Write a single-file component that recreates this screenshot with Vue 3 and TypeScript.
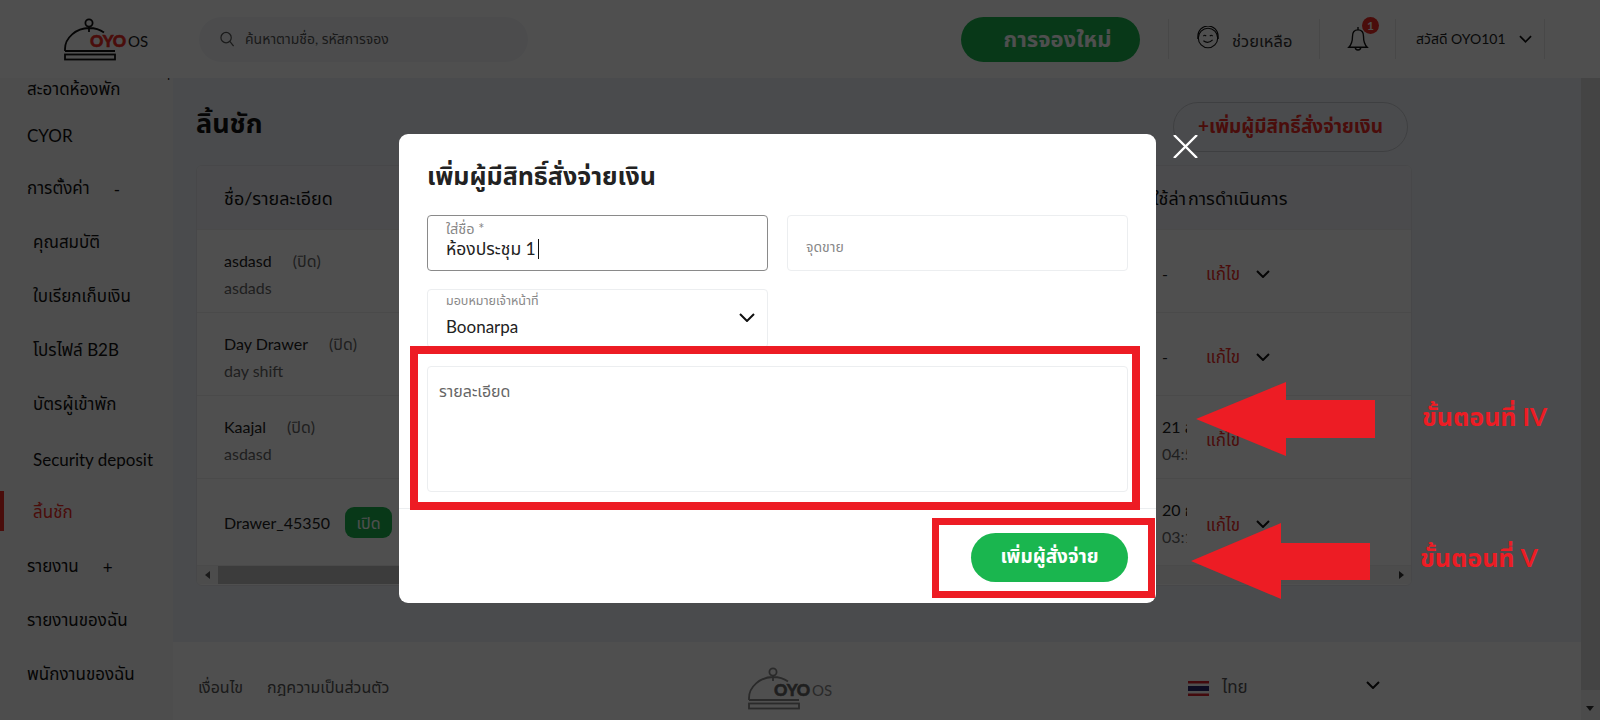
<script setup lang="ts">
interface NavItem { label: string; sub?: boolean; active?: boolean; sign?: string }
interface Row { name: string; status: string; open?: boolean; detail?: string; date: string; time?: string }

const nav: NavItem[] = [
  { label: 'สะอาดห้องพัก' },
  { label: 'CYOR' },
  { label: 'การตั้งค่า', sign: '-' },
  { label: 'คุณสมบัติ', sub: true },
  { label: 'ใบเรียกเก็บเงิน', sub: true },
  { label: 'โปรไฟล์ B2B', sub: true },
  { label: 'บัตรผู้เข้าพัก', sub: true },
  { label: 'Security deposit', sub: true },
  { label: 'ลิ้นชัก', sub: true, active: true },
  { label: 'รายงาน', sign: '+' },
  { label: 'รายงานของฉัน' },
  { label: 'พนักงานของฉัน' }
]

const rows: Row[] = [
  { name: 'asdasd', status: '(ปิด)', detail: 'asdads', date: '-' },
  { name: 'Day Drawer', status: '(ปิด)', detail: 'day shift', date: '-' },
  { name: 'Kaajal', status: '(ปิด)', detail: 'asdasd', date: '21 ส.ค.', time: '04:50' },
  { name: 'Drawer_45350', status: 'เปิด', open: true, date: '20 ก.ค.', time: '03:10' }
]
</script>

<template>
  <div class="page">
    <header class="topbar">
      <div class="brand">
        <svg class="logo" viewBox="0 0 90 50" width="90" height="50">
          <circle cx="29" cy="9" r="3.6" />
          <path d="M29 13v5M5 37v-2C5 24 16 14 29 14c6 0 11 1.500 15 4.500" />
          <path d="M5 37h50" />
          <rect x="5" y="40.500" width="50" height="5" />
          <text class="oyo" x="30" y="33">OYO</text>
          <text class="os" x="68" y="33">OS</text>
        </svg>
      </div>
      <div class="search">
        <svg viewBox="0 0 16 18" width="15" height="17"><circle cx="6.500" cy="7" r="5.500" /><path d="M10.500 11l4 5" /></svg>
        <span>ค้นหาตามชื่อ, รหัสการจอง</span>
      </div>
      <button class="new-booking">การจองใหม่</button>
      <div class="tool help">
        <svg viewBox="0 0 26 26" width="24" height="24">
          <circle cx="13" cy="13" r="10.500" />
          <path d="M2 14v-3a11 11 0 0 1 22 0v3M8 11q1.500-2 3 0M15 11q1.500-2 3 0M8 16q5 4 10-1" />
        </svg>
        <span>ช่วยเหลือ</span>
      </div>
      <div class="tool bell">
        <svg viewBox="0 0 24 28" width="22" height="26">
          <path d="M12 4c-4 0-6 3-6 7 0 6-1 9-4 12h20c-3-3-4-6-4-12 0-4-2-7-6-7zM12 1v3M9 23a3 3 0 0 0 6 0" />
        </svg>
        <b>1</b>
      </div>
      <div class="tool user">
        <span>สวัสดี OYO101</span>
        <svg class="chev" viewBox="0 0 14 8" width="13" height="8"><path d="M1 1l6 6 6-6" /></svg>
      </div>
    </header>

    <div class="body">
      <aside class="sidebar">
        <i class="clipped-plus">+</i>
        <a v-for="item in nav" :key="item.label" class="nav-item" :class="{ sub: item.sub, active: item.active }">
          {{ item.label }}<em v-if="item.sign">{{ item.sign }}</em>
        </a>
      </aside>

      <div class="column">
        <main class="content">
          <div class="title-row">
            <h1>ลิ้นชัก</h1>
            <button class="add">+เพิ่มผู้มีสิทธิ์สั่งจ่ายเงิน</button>
          </div>
          <section class="table">
            <div class="thead">
              <span>ชื่อ/รายละเอียด</span>
              <div class="thead-right"><span class="last-used">ใช้ล่า</span><span>การดำเนินการ</span></div>
            </div>
            <div v-for="row in rows" :key="row.name" class="row" :class="{ tall: row.open }">
              <div class="who">
                <div class="name">
                  {{ row.name }}
                  <span v-if="!row.open" class="closed">{{ row.status }}</span>
                  <span v-else class="badge">{{ row.status }}</span>
                </div>
                <div v-if="row.detail" class="detail">{{ row.detail }}</div>
              </div>
              <div class="row-right">
                <div class="when">
                  <div>{{ row.date }}</div>
                  <div v-if="row.time" class="detail">{{ row.time }}</div>
                </div>
                <a class="edit">แก้ไข</a>
                <svg class="chev big" viewBox="0 0 14 8" width="14" height="8"><path d="M1 1l6 6 6-6" /></svg>
              </div>
            </div>
            <div class="hscroll">
              <i class="arrow-l"></i>
              <div class="hthumb"></div>
              <i class="arrow-r"></i>
            </div>
          </section>
        </main>

        <footer class="footer">
          <nav class="links"><a>เงื่อนไข</a><a>กฎความเป็นส่วนตัว</a></nav>
          <svg class="logo muted" viewBox="0 0 90 50" width="90" height="50">
            <circle cx="29" cy="9" r="3.600" />
            <path d="M29 13v5M5 37v-2C5 24 16 14 29 14c6 0 11 1.500 15 4.500" />
            <path d="M5 37h50" />
            <rect x="5" y="40.500" width="50" height="5" />
            <text class="oyo" x="30" y="33">OYO</text>
            <text class="os" x="68" y="33">OS</text>
          </svg>
          <div class="lang">
            <svg viewBox="0 0 21 15" width="21" height="15">
              <rect width="21" height="15" fill="#fff" />
              <rect width="21" height="2.500" fill="#d8232a" />
              <rect y="12.500" width="21" height="2.500" fill="#d8232a" />
              <rect y="5" width="21" height="5" fill="#2d2a6e" />
            </svg>
            <span>ไทย</span>
            <svg class="chev big" viewBox="0 0 14 8" width="14" height="8"><path d="M1 1l6 6 6-6" /></svg>
          </div>
        </footer>
      </div>

      <div class="vscroll"><div class="vthumb"></div><i class="arrow-d"></i></div>
    </div>

    <div class="overlay"></div>

    <div class="modal" role="dialog">
      <h2>เพิ่มผู้มีสิทธิ์สั่งจ่ายเงิน</h2>
      <div class="form">
        <div class="field focused">
          <label>ใส่ชื่อ *</label>
          <div class="value">ห้องประชุม 1<i class="caret"></i></div>
        </div>
        <div class="field plain"><label>จุดขาย</label></div>
        <div class="field select">
          <label>มอบหมายเจ้าหน้าที่</label>
          <div class="value">Boonarpa</div>
          <svg class="chev big" viewBox="0 0 16 9" width="16" height="9"><path d="M1 1l7 7 7-7" /></svg>
        </div>
        <div class="field area"><label>รายละเอียด</label></div>
      </div>
      <div class="modal-foot"><button class="submit">เพิ่มผู้สั่งจ่าย</button></div>
    </div>

    <svg class="close" viewBox="0 0 25 23" width="25" height="23"><path d="M1 0l23 23M24 0L1 23" /></svg>

    <div class="frame frame-a"></div>
    <div class="frame frame-b"></div>
    <svg class="arrows" viewBox="0 0 1600 720" width="1600" height="720">
      <polygon points="1196,419 1286,382 1286,400 1375,400 1375,438 1286,438 1286,456" />
      <polygon points="1191,561 1281,523 1281,543 1370,543 1370,580 1281,580 1281,599" />
    </svg>
    <div class="step step-a">ขั้นตอนที่ IV</div>
    <div class="step step-b">ขั้นตอนที่ V</div>
  </div>
</template>

<style>
html, body { margin: 0; padding: 0; }
</style>

<style scoped>
.page {
  position: relative;
  width: 1600px;
  height: 720px;
  overflow: hidden;
  display: flex;
  flex-direction: column;
  background: #fff;
  color: #1d1d1d;
  font-family: Lato, "Noto Sans", "Noto Sans Thai", sans-serif;
  font-size: 16px;
}
button { font-family: inherit; border: 0; cursor: pointer; }
svg { display: block; flex: none; }
.chev path { fill: none; stroke: #111; stroke-width: 1.800; }
.chev.big path { stroke-width: 2; }

/* top bar */
.topbar { height: 78px; flex: none; display: flex; align-items: center; background: #fff; box-sizing: border-box; padding-right: 55px; }
.brand { width: 199px; flex: none; padding-left: 60px; box-sizing: border-box; }
.logo { fill: none; stroke: #111; stroke-width: 1.800; }
.logo text { stroke: none; }
.logo .oyo { font: 900 16.500px Lato, sans-serif; fill: #ee2a24; stroke: #ee2a24; stroke-width: 0.500; }
.logo .os { font: 400 15px Lato, sans-serif; fill: #222; }
.logo.muted { stroke: #888; }
.logo.muted .oyo { fill: #666; stroke: #666; }
.logo.muted .os { fill: #888; }
.search {
  width: 329px; height: 45px; flex: none; box-sizing: border-box; padding-left: 21px;
  display: flex; align-items: center; gap: 10px;
  background: #f4f6f9; border-radius: 23px; color: #555; font-size: 14px;
}
.search span { padding-top: 1px; }
.search svg { fill: none; stroke: #555; stroke-width: 1.300; }
.new-booking {
  margin-left: auto; width: 179px; height: 45px; flex: none; border-radius: 23px; padding: 2px 0 0 14px;
  background: #1ab64f; color: #fff; font-size: 22px; font-weight: 700;
}
.tool {
  height: 40px; flex: none; display: flex; align-items: center; position: relative;
  box-sizing: border-box; border-left: 1px solid #e8e8e8;
}
.help { margin-left: 28px; width: 151px; padding-left: 27px; gap: 12px; color: #333; font-size: 16.500px; }
.help svg { fill: none; stroke: #111; stroke-width: 1.200; margin-top: -2px; }
.help span { padding-top: 5px; }
.bell { width: 76px; padding-left: 27px; }
.bell svg { fill: none; stroke: #111; stroke-width: 1.500; }
.bell b {
  position: absolute; left: 42px; top: -2px; width: 17px; height: 17px; border-radius: 50%;
  background: #ee2a24; color: #fff; font-size: 12px; text-align: center; line-height: 17px;
}
.user { width: 150px; padding-left: 20px; justify-content: space-between; padding-right: 12px; border-right: 1px solid #e8e8e8; font-size: 14px; color: #222; }

/* shell */
.body { flex: 1; min-height: 0; display: flex; }
.sidebar { width: 173px; flex: none; position: relative; overflow: hidden; background: #f8f8f8; }
.clipped-plus { position: absolute; right: 0; top: -12px; font-style: normal; font-size: 15px; color: #111; }
.nav-item {
  display: flex; align-items: center; height: 54px; padding-left: 27px; position: relative;
  color: #111; font-size: 17px; white-space: pre;
}
.nav-item:first-of-type { margin-top: -6px; height: 36px; }
.nav-item.sub { padding-left: 33px; }
.nav-item em { font-style: normal; margin-left: 24px; }
.nav-item.active { color: #ee2a24; }
.nav-item.active::before { content: ""; position: absolute; left: 0; top: 5px; width: 4px; height: 40px; background: #ee2a24; }
.column { flex: 1; min-width: 0; display: flex; flex-direction: column; }
.content { flex: 1; min-height: 0; background: #eff2f8; padding: 24px 169px 0 23px; box-sizing: border-box; }
.title-row { height: 50px; display: flex; align-items: center; justify-content: space-between; padding-right: 4px; }
h1 { margin: -5px 0 0; font-size: 27px; font-weight: 700; color: #111; }
.add {
  width: 235px; height: 50px; border-radius: 25px; background: transparent; border: 1px solid #c9ccd2;
  color: #ee2a24; font-size: 19px; font-weight: 700; padding: 0;
}
.table { margin-top: 13px; height: 421px; box-sizing: border-box; background: #fff; border-radius: 6px; overflow: hidden; border: 1px solid #e4e6ea; }
.thead { height: 63px; box-sizing: border-box; padding: 3px 0 0 27px; display: flex; align-items: center; justify-content: space-between; background: #f1f3f7; color: #111; font-size: 18px; }
.thead-right { width: 291px; display: flex; gap: 2px; }
.last-used { width: 66px; text-align: right; }
.row {
  height: 83px; box-sizing: border-box; padding: 5px 0 0 27px; border-top: 1px solid #efefef;
  display: flex; align-items: center; justify-content: space-between;
}
.row.tall { height: 87px; padding-top: 1px; }
.name { color: #222; line-height: 27px; white-space: nowrap; display: flex; align-items: center; }
.closed { color: #666; margin-left: 21px; }
.badge { margin-left: 15px; width: 47px; height: 31px; border-radius: 9px; background: #1ab64f; color: #fff; text-align: center; line-height: 31px; }
.detail { color: #666; line-height: 27px; }
.row-right { width: 249px; display: flex; align-items: center; }
.when { width: 25px; overflow: hidden; white-space: nowrap; line-height: 27px; margin-right: 19px; color: #222; }
.edit { color: #ee2a24; font-size: 17px; margin-right: 16px; padding-top: 3px; }
.row.tall .edit { padding-top: 6px; }
.row.tall .chev { margin-top: 3px; }
.hscroll { height: 18px; display: flex; align-items: center; background: #f5f5f5; border-top: 1px solid #eee; }
.hthumb { margin-left: 8px; width: 800px; height: 18px; background: #c1c1c1; }
.arrow-l { margin-left: 8px; border: 4px solid transparent; border-left: 0; border-right: 5px solid #555; }
.arrow-r { margin-left: auto; margin-right: 7px; border: 4px solid transparent; border-right: 0; border-left: 5px solid #333; }
.footer { height: 78px; flex: none; box-sizing: border-box; padding: 14px 0 0 25px; background: #fff; display: flex; align-items: center; color: #555; font-size: 16px; }
.links { width: 546px; flex: none; display: flex; gap: 24px; }
.footer .logo { margin-right: 354px; }
.lang { width: 192px; flex: none; display: flex; align-items: center; gap: 13px; font-size: 17px; }
.lang .chev { margin-left: auto; margin-top: -6px; }
.vscroll { width: 19px; flex: none; position: relative; background: #f1f1f1; }
.vthumb { height: 612px; background: #dcdcdc; }
.arrow-d { position: absolute; left: 5px; bottom: 9px; border: 4px solid transparent; border-bottom: 0; border-top: 5px solid #333; }

/* dialog */
.overlay { position: absolute; inset: 0; background: rgba(0, 0, 0, 0.69); }
.modal {
  position: absolute; left: 399px; top: 134px; width: 757px; height: 469px; box-sizing: border-box;
  padding-top: 26px; background: #fff; border-radius: 9px; display: flex; flex-direction: column;
}
h2 { margin: 0 0 25px 28px; height: 30px; line-height: 30px; font-size: 25px; font-weight: 700; color: #222; white-space: nowrap; }
.form { display: grid; grid-template-columns: 341px 341px; column-gap: 19px; row-gap: 18px; padding: 0 28px; align-items: start; }
.field { border: 1px solid #eceef0; border-radius: 4px; box-sizing: border-box; position: relative; height: 56px; padding-left: 18px; }
.field label { display: block; color: #888; font-size: 12.500px; line-height: 14px; }
.focused { border-color: #8a8a8a; padding-top: 6px; }
.focused label { font-size: 14.500px; }
.focused .value { font-size: 17.500px; line-height: 24px; margin-top: 1px; color: #222; display: flex; align-items: center; }
.caret { width: 1px; height: 20px; background: #111; margin-left: 2px; }
.plain { padding-top: 24px; padding-left: 18px; }
.plain label { font-size: 14px; }
.select { height: 59px; padding-top: 4px; }
.select .value { font-size: 17px; line-height: 20px; margin-top: 9px; color: #222; }
.select .chev { position: absolute; right: 12px; top: 23px; }
.area { grid-column: 1 / -1; height: 126px; padding: 16px 0 0 11px; }
.area label { color: #666; font-size: 16px; line-height: 16px; }
.modal-foot { margin-top: 16px; flex: 1; border-top: 1px solid #eceef0; display: flex; justify-content: flex-end; padding: 24px 28px 0 0; }
.submit { width: 157px; height: 49px; border-radius: 25px; background: #1ab64f; color: #fff; font-size: 19px; font-weight: 700; padding: 0; }
.close { position: absolute; left: 1173px; top: 135px; }
.close path { fill: none; stroke: #fff; stroke-width: 2.400; }

/* annotations */
.frame { position: absolute; box-sizing: border-box; border: 8px solid #ed1c24; }
.frame-a { left: 410px; top: 346px; width: 730px; height: 164px; }
.frame-b { left: 932px; top: 518px; width: 223px; height: 80px; border-width: 7px; }
.arrows { position: absolute; left: 0; top: 0; fill: #ed1c24; pointer-events: none; }
.step { position: absolute; color: #ed1c24; font-size: 25px; font-weight: 700; white-space: nowrap; line-height: 28px; }
.step-a { left: 1422px; top: 402px; }
.step-b { left: 1420px; top: 543px; }
</style>
